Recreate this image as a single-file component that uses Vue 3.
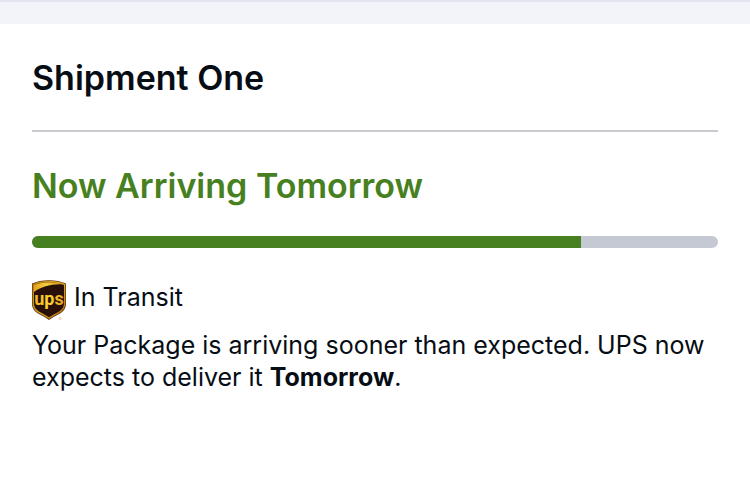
<script setup>
const shipment = {
  title: 'Shipment One',
  headline: 'Now Arriving Tomorrow',
  progress: 80,
  status: 'In Transit',
}
</script>

<template>
  <main class="page">
    <div class="divider-band"></div>
    <section class="shipment">
      <h1 class="title">{{ shipment.title }}</h1>
      <h2 class="headline">{{ shipment.headline }}</h2>
      <div
        class="track"
        role="progressbar"
        aria-label="Delivery progress"
        aria-valuemin="0"
        aria-valuemax="100"
        :aria-valuenow="shipment.progress"
      >
        <div class="fill" :style="{ width: shipment.progress + '%' }"></div>
      </div>
      <div class="status">
        <svg class="logo" viewBox="0 0 34 40" aria-label="UPS">
          <defs>
            <linearGradient id="rim" x1="0" y1="0" x2="1" y2="1">
              <stop offset="0" stop-color="#b57a10" />
              <stop offset="0.5" stop-color="#e2a52a" />
              <stop offset="1" stop-color="#a8690f" />
            </linearGradient>
            <linearGradient id="sweep" x1="0" y1="0" x2="1" y2="0">
              <stop offset="0" stop-color="#e0a01a" />
              <stop offset="0.4" stop-color="#f7cd3c" />
              <stop offset="1" stop-color="#c68c1c" />
            </linearGradient>
            <linearGradient id="letters" x1="0" y1="0" x2="1" y2="0">
              <stop offset="0" stop-color="#f2b11d" />
              <stop offset="0.5" stop-color="#ffd633" />
              <stop offset="1" stop-color="#dfa023" />
            </linearGradient>
          </defs>
          <path d="M0 3.5C9-1 25-1 34 3.5V23c0 5-2 8-6 10.500Q22 36.500 17 40Q12 36.500 6 33.500C2 31 0 28 0 23Z" fill="#57340d" />
          <path d="M.7 4C10-.3 24-.3 33.300 4V23c0 4.500-2 7.500-5.600 9.700Q22 35.600 17 39Q12 35.600 6.300 32.700C2.700 30.500.7 27.500.7 23Z" fill="url(#rim)" />
          <path d="M2 5C11 1.300 23 1.300 32 5V23c0 4-1.700 6.400-4.900 8.400Q22 34 17 37.300Q12 34 6.900 31.400C3.700 29.400 2 27 2 23Z" fill="#281009" />
          <path d="M2 5C10 1.300 24 1.300 32 4.300C20 3.500 9 6.500 2 12Z" fill="url(#sweep)" />
          <text class="mark" x="17" y="25" text-anchor="middle" fill="url(#letters)">ups</text>
          <circle cx="28" cy="38.500" r="1" fill="none" stroke="#e3b47c" stroke-width="0.700" />
        </svg>
        <span>{{ shipment.status }}</span>
      </div>
      <p class="message">
        Your Package is arriving sooner than expected. UPS now expects to deliver it <strong>Tomorrow</strong>.
      </p>
    </section>
  </main>
</template>

<style>
body {
  margin: 0;
  background: #fff;
}
</style>

<style scoped>
.page {
  font-family: Inter, "Liberation Sans", sans-serif;
  color: #060d14;
}

.divider-band {
  box-sizing: border-box;
  height: 24px;
  border-top: 2px solid #e2e4ef;
  background: #f3f4f9;
}

.shipment {
  padding: 34px 32px;
}

.title,
.headline {
  margin: 0;
  font-size: 34px;
  font-weight: 600;
  line-height: 40px;
}

.title {
  padding-bottom: 32px;
  border-bottom: 2px solid #c8cad0;
}

.headline {
  margin-top: 34px;
  color: #478020;
}

.track {
  height: 12px;
  margin-top: 30px;
  border-radius: 6px;
  background: #c5c9d4;
  overflow: hidden;
}

.fill {
  height: 100%;
  background: #478020;
}

.status {
  display: flex;
  align-items: flex-start;
  gap: 8px;
  margin-top: 32px;
  font-size: 25px;
  line-height: 34px;
}

.logo {
  flex: none;
  width: 34px;
  height: 40px;
}

.mark {
  font-family: Roboto, "Liberation Sans", sans-serif;
  font-size: 18px;
  font-weight: 700;
}

.message {
  margin: 9px 0 0;
  font-size: 25px;
  line-height: 32px;
}

.message strong {
  font-weight: 700;
}
</style>
